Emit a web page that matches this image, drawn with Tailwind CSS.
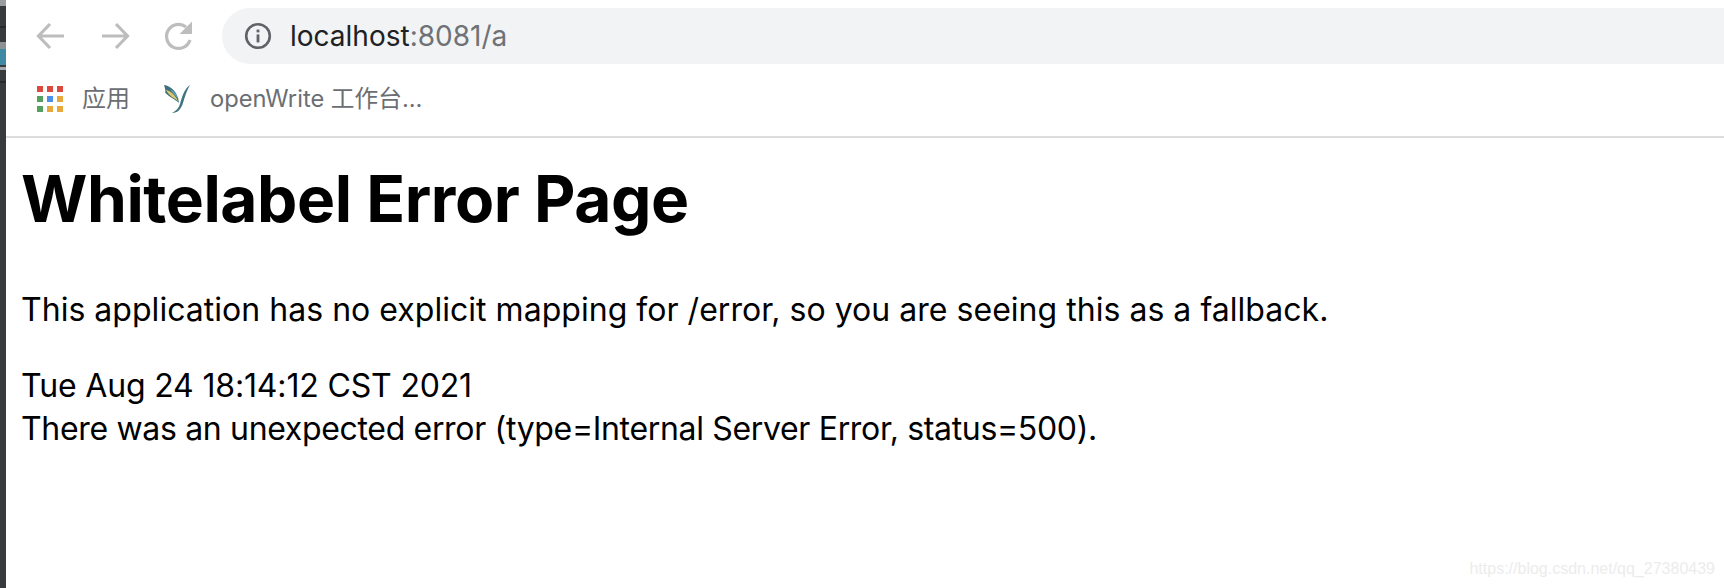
<!DOCTYPE html>
<html lang="en">

<head>
    <meta charset="UTF-8">
    <script src="https://cdn.jsdelivr.net/npm/@tailwindcss/browser@4"></script>
    <title>Whitelabel Error Page</title>
</head>

<body class="bg-white overflow-hidden">
    <div class="flex h-[588px] w-[1724px] font-['Inter','Noto_Sans_CJK_SC',sans-serif]">
        <!-- desktop behind the window -->
        <div class="w-[6px] shrink-0 bg-[#383b3e] flex flex-col">
            <div class="h-[6px] bg-[#9a9d9f]"></div>
            <div class="h-[20px]"></div>
            <div class="h-[2px] bg-[#27292b]"></div>
            <div class="h-[14px]"></div>
            <div class="h-[7px] bg-[#8d9193]"></div>
            <div class="h-[16px] bg-[#3f8aa3]"></div>
            <div class="h-[2px]"></div>
            <div class="h-[3px] bg-[#a5a8aa]"></div>
            <div class="h-[11px]"></div>
            <div class="h-[2px] bg-[#27292b]"></div>
        </div>

        <div class="flex-1 min-w-0 flex flex-col relative">
            <!-- toolbar -->
            <div class="h-[75px] flex items-start pt-[8px]">
                <div class="flex items-center h-[56px] pl-[29px] gap-[32px]">
                    <svg class="w-[32px] h-[32px]" viewBox="0 0 32 32" fill="none" stroke="#bdbdbd" stroke-width="3.2">
                        <path d="M29 16H4M15 4 3.5 16 15 28" />
                    </svg>
                    <svg class="w-[32px] h-[32px]" viewBox="0 0 32 32" fill="none" stroke="#bdbdbd" stroke-width="3.2">
                        <path d="M3 16H28M17 4 28.5 16 17 28" />
                    </svg>
                    <svg class="w-[32px] h-[32px]" viewBox="0 0 32 32" fill="none">
                        <path d="M27 20A12 12 0 1 1 23 7" stroke="#bdbdbd" stroke-width="3.2" />
                        <path d="M29 1.5V14H16.5Z" fill="#bdbdbd" />
                    </svg>
                </div>
                <div class="ml-[27px] flex-1 h-[56px] bg-[#f1f3f4] rounded-l-[28px] flex items-center pl-[22px]">
                    <svg class="w-[28px] h-[28px] shrink-0" viewBox="0 0 28 28" fill="none">
                        <circle cx="14" cy="14" r="11.8" stroke="#5f6368" stroke-width="2.6" />
                        <rect x="12.6" y="12.4" width="2.8" height="8" fill="#5f6368" />
                        <rect x="12.6" y="7.6" width="2.8" height="2.8" fill="#5f6368" />
                    </svg>
                    <span class="ml-[18px] text-[28px] text-[#202124]">localhost<span class="text-[#6e7175]">:8081/a</span></span>
                </div>
            </div>

            <!-- bookmarks bar -->
            <div class="h-[63px] flex items-center border-b-2 border-[#dcdddf] pl-[31px] pb-[14px]">
                <div class="grid grid-cols-3 gap-[4px] w-[26px] shrink-0">
                    <div class="h-[6px] bg-[#dc4a3f]"></div>
                    <div class="h-[6px] bg-[#dc4a3f]"></div>
                    <div class="h-[6px] bg-[#dc4a3f]"></div>
                    <div class="h-[6px] bg-[#53a05f]"></div>
                    <div class="h-[6px] bg-[#4a8fe8]"></div>
                    <div class="h-[6px] bg-[#e8a93c]"></div>
                    <div class="h-[6px] bg-[#53a05f]"></div>
                    <div class="h-[6px] bg-[#e8a93c]"></div>
                    <div class="h-[6px] bg-[#e8a93c]"></div>
                </div>
                <span class="ml-[19px] text-[24px] text-[#6b6e72]">应用</span>
                <svg class="ml-[33px] w-[28px] h-[30px] shrink-0" viewBox="0 0 28 30" fill="none">
                    <path d="M1 1C8 2 15 8 16 19 12 15 4 12 2 8 3 8 2 4 1 1Z" fill="#3f6f7c" />
                    <path d="M3 6C8 7 12 11 15 17 11 14 6 12 3 6Z" fill="#d9c96a" />
                    <path d="M7 5C11 7 14 11 15.5 15 12 11 9 8 7 5Z" fill="#6fa7c4" />
                    <path d="M27 1C21 5 19 13 17 20 16 24 13 27 9 29 15 29 18 25 20 19 22 12 24 6 27 1Z" fill="#3f7480" />
                </svg>
                <span class="ml-[19px] text-[23.7px] text-[#6b6e72]">openWrite 工作台...</span>
            </div>

            <!-- page -->
            <div class="pl-[15px] text-black">
                <h1 class="mt-[22px] text-[64px] leading-[78px] font-bold tracking-[-0.43px]">Whitelabel Error Page</h1>
                <p class="mt-[50px] text-[32px] leading-[43px] tracking-[0.03px]">This application has no explicit mapping for /error, so you are seeing this as a fallback.</p>
                <p class="mt-[33px] text-[32px] leading-[43px] tracking-[-0.16px]">Tue Aug 24 18:14:12 CST 2021</p>
                <p class="text-[32px] leading-[43px] tracking-[-0.33px]">There was an unexpected error (type=Internal Server Error, status=500).</p>
            </div>

            <!-- watermark -->
            <span class="absolute right-[9px] bottom-[7px] text-[16px] font-['Liberation_Sans',sans-serif] text-[#ececec]">https://blog.csdn.net/qq_27380439</span>
        </div>
    </div>
</body>

</html>
